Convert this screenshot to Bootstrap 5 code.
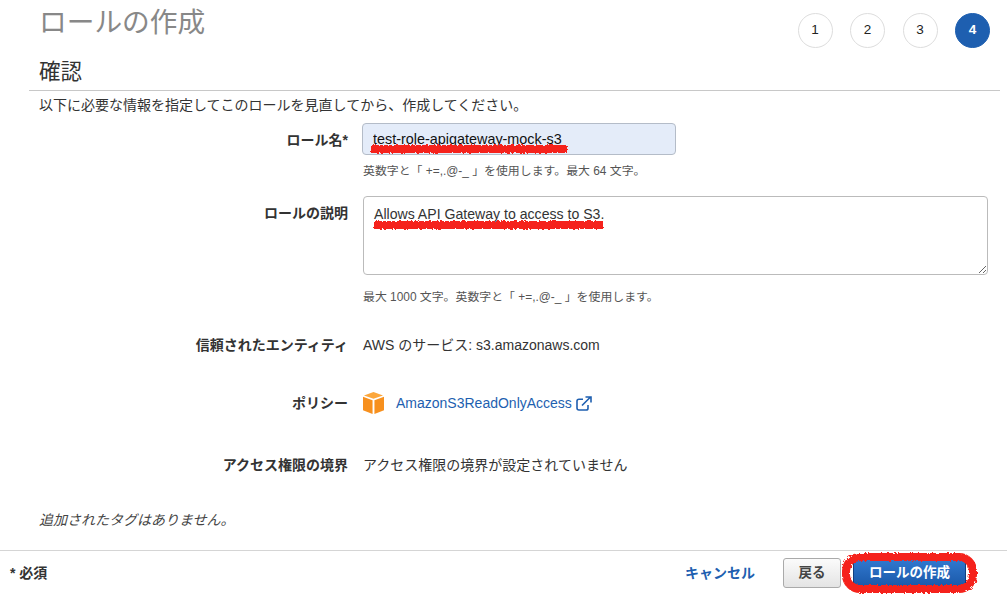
<!DOCTYPE html>
<html lang="ja">
<head>
<meta charset="utf-8">
<title>ロールの作成</title>
<link href="https://cdn.jsdelivr.net/npm/bootstrap@5.3.0/dist/css/bootstrap.min.css" rel="stylesheet">
<style>
html,body{height:596px;overflow:hidden}
body{font-family:"Liberation Sans","Noto Sans CJK JP",sans-serif;font-size:14px;color:#333;background:#fff}
.page-top{height:46px;padding:0 17px 0 39px}
.page-title{font-size:27.7px;line-height:46px;color:#888;margin:0;font-weight:400}
.steps{gap:17.500px;padding-top:13px}
.step{width:35px;height:35px;border:1px solid #ddd;border-radius:50%;color:#222;font-size:13.5px}
.step-on{background:#1e5fb0;border-color:#1e5fb0;color:#fff;font-weight:700}
.section-head{margin:0 7px 0 29px;padding:11px 0 0 10px;height:45px;border-bottom:1px solid #c8c8c8}
.section-head h2{font-size:21.5px;line-height:30px;margin:0;font-weight:400;color:#333}
.intro{margin:6px 0 0 39px;line-height:16px;font-size:14px;color:#333}
.frow{display:flex;align-items:flex-start}
.flabel{width:348px;flex:none;text-align:right;font-weight:700;color:#333;font-size:14px;line-height:18px}
.fval{margin-left:15px;flex:none;position:relative}
.name-input,.desc-input{display:block;border-radius:4px;font-family:inherit;box-shadow:none}
.name-input{width:314px;height:32px;margin-left:-1px;padding:0 10px;background:#e4ecf9;border:1px solid #b4bcc8;font-size:14.4px;color:#111}
.desc-input{width:625px;height:79px;padding:7px 10px;border:1px solid #bbb;line-height:20px;color:#333;font-size:14.1px}
.hint{font-size:11.9px;line-height:16px;color:#555;margin-top:8px}
.scribble{position:absolute;pointer-events:none;overflow:visible}
.fval-text{font-size:14px;line-height:18px;color:#333}
.plink{color:#1e5fb0;font-size:14px;text-decoration:none}
.tagnote{margin:39px 0 0 39px;font-style:italic;font-size:14px;line-height:16px;color:#444}
.foot{margin-top:22px;border-top:1px solid #d5d5d5;height:45px;padding:0 41px 0 10px}
.req{font-size:14px;font-weight:700;color:#333}
.cancel{color:#1e5fb0;font-weight:700;font-size:14px;text-decoration:none}
.back-btn{width:58px;height:30px;padding:0;font-size:13.5px;font-weight:700;color:#444;background:linear-gradient(#fbfbfb,#e4e4e4);border:1px solid #aaa;border-radius:3px;margin-left:28px}
.create-btn{position:relative;width:113px;height:30px;padding:0;font-size:13.5px;font-weight:700;color:#fff;background:linear-gradient(#3179d0,#1a58a8);border:1px solid #123f80;border-radius:3px;margin-left:12px}
.create-btn:hover{color:#fff}
.ring{left:-11px;top:-6px}
</style>
</head>
<body>
<svg width="0" height="0" class="position-absolute"><filter id="rough" x="-10%" y="-60%" width="120%" height="220%"><feTurbulence type="fractalNoise" baseFrequency=".45" numOctaves="2" seed="4"/><feDisplacementMap in="SourceGraphic" scale="4"/></filter></svg>

<div class="page-top d-flex justify-content-between align-items-start">
  <h1 class="page-title">ロールの作成</h1>
  <div class="steps d-flex">
    <div class="step d-flex align-items-center justify-content-center">1</div>
    <div class="step d-flex align-items-center justify-content-center">2</div>
    <div class="step d-flex align-items-center justify-content-center">3</div>
    <div class="step step-on d-flex align-items-center justify-content-center">4</div>
  </div>
</div>
<div class="section-head"><h2>確認</h2></div>
<p class="intro">以下に必要な情報を指定してこのロールを見直してから、作成してください。</p>

<div class="frow" style="margin-top:10px">
  <div class="flabel pt-2">ロール名*</div>
  <div class="fval">
    <input class="name-input" type="text" value="test-role-apigateway-mock-s3">
    <svg class="scribble" style="left:7px;top:21px" width="198" height="11"><rect x="1" y="1" width="196" height="8" fill="#f5241a" filter="url(#rough)"/></svg>
    <div class="hint">英数字と「 +=,.@-_ 」を使用します。最大 64 文字。</div>
  </div>
</div>

<div class="frow" style="margin-top:17px">
  <div class="flabel pt-2">ロールの説明</div>
  <div class="fval">
    <textarea class="desc-input">Allows API Gateway to access to S3.</textarea>
    <svg class="scribble" style="left:10px;top:24px" width="232" height="11"><rect x="1" y="1" width="229" height="8" fill="#f5241a" filter="url(#rough)"/></svg>
    <div class="hint" style="margin-top:14px">最大 1000 文字。英数字と「 +=,.@-_ 」を使用します。</div>
  </div>
</div>

<div class="frow" style="margin-top:31px">
  <div class="flabel">信頼されたエンティティ</div>
  <div class="fval fval-text">AWS のサービス: s3.amazonaws.com</div>
</div>

<div class="frow align-items-center" style="margin-top:38px">
  <div class="flabel">ポリシー</div>
  <div class="fval d-flex align-items-center">
    <svg width="21" height="22" viewBox="0 0 22 23"><path d="M11 0 21 3.6 11 7 1 3.6Z" fill="#fca73c"/><path d="M0 5 10 8.5V23L0 19Z" fill="#f7901e"/><path d="M22 5 12 8.5V23L22 19Z" fill="#f7901e"/></svg>
    <a class="plink d-flex align-items-center" style="margin-left:12px" href="#">AmazonS3ReadOnlyAccess<svg class="ms-1" width="16" height="15" viewBox="0 0 16 15" fill="none" stroke="#1e5fb0" stroke-width="1.6"><path d="M12 9v3.2c0 1-.7 1.8-1.8 1.8H3C1.800 14 1 13.200 1 12V5c0-1 .8-1.800 2-1.800h4"/><path d="M6 9.500 14 1.500M9.500 1h5.500v5.500" /></svg></a>
  </div>
</div>

<div class="frow" style="margin-top:42px">
  <div class="flabel">アクセス権限の境界</div>
  <div class="fval fval-text">アクセス権限の境界が設定されていません</div>
</div>

<p class="tagnote" style="margin-top:38px">追加されたタグはありません。</p>

<div class="foot d-flex align-items-center justify-content-between">
  <div class="req">* 必須</div>
  <div class="d-flex align-items-center">
    <a class="cancel" href="#">キャンセル</a>
    <button class="btn back-btn" type="button">戻る</button>
    <button class="btn create-btn" type="button">ロールの作成
      <svg class="scribble ring" width="133" height="40"><rect x="3" y="4" width="127" height="32" rx="14" fill="none" stroke="#f5241a" stroke-width="8" filter="url(#rough)"/></svg>
    </button>
  </div>
</div>
<script src="https://cdn.jsdelivr.net/npm/bootstrap@5.3.0/dist/js/bootstrap.bundle.min.js"></script>
</body>
</html>
